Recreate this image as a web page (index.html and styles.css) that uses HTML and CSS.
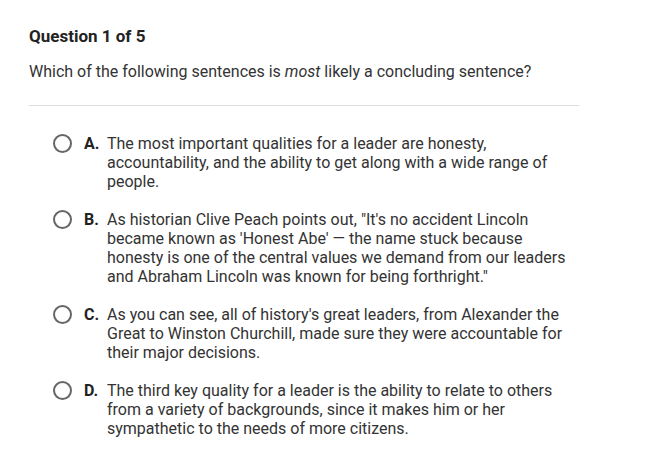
FILE: index.html
```html
<!DOCTYPE html>
<html>
<head>
<meta charset="utf-8">
<link rel="stylesheet" href="styles.css">
</head>
<body>
<div class="page">
  <h1 class="title">Question 1 of 5</h1>
  <p class="prompt">Which of the following sentences is <em>most</em> likely a concluding sentence?</p>
  <hr class="divider">
  <ul class="options">
    <li class="option"><span class="radio"></span><span class="letter">A.</span><span class="text">The most important qualities for a leader are honesty, accountability, and the ability to get along with a wide range of people.</span></li>
    <li class="option"><span class="radio"></span><span class="letter">B.</span><span class="text">As historian Clive Peach points out, "It's no accident Lincoln became known as 'Honest Abe' — the name stuck because honesty is one of the central values we demand from our leaders and Abraham Lincoln was known for being forthright."</span></li>
    <li class="option"><span class="radio"></span><span class="letter">C.</span><span class="text">As you can see, all of history's great leaders, from Alexander the Great to Winston Churchill, made sure they were accountable for their major decisions.</span></li>
    <li class="option"><span class="radio"></span><span class="letter">D.</span><span class="text">The third key quality for a leader is the ability to relate to others from a variety of backgrounds, since it makes him or her sympathetic to the needs of more citizens.</span></li>
  </ul>
</div>
</body>
</html>
```
FILE: styles.css
```css
html, body { margin: 0; padding: 0; background: #fff; }
body { font-family: Roboto, "Liberation Sans", sans-serif; color: #333; }
.page { padding: 26px 0 0 29px; width: 550px; }
.title { margin: 0; font-size: 17px; font-weight: 700; color: #222; line-height: 20px; }
.prompt { margin: 16px 0 0; font-size: 16px; line-height: 19px; color: #333; }
.prompt em { font-style: italic; }
.divider { margin: 24px 0 0; border: 0; border-top: 1px solid #ddd; height: 0; }
.options { list-style: none; margin: 28px 0 0; padding: 0 0 0 24px; display: flex; flex-direction: column; gap: 19px; }
.option { display: flex; align-items: flex-start; font-size: 16px; line-height: 19px; }
.radio { flex: none; width: 15px; height: 15px; border: 2px solid #666; border-radius: 50%; margin: 0 12px 0 0; }
.letter { flex: none; width: 23px; font-weight: 700; color: #222; }
.text { flex: 1; color: #333; padding-right: 4px; }
```
